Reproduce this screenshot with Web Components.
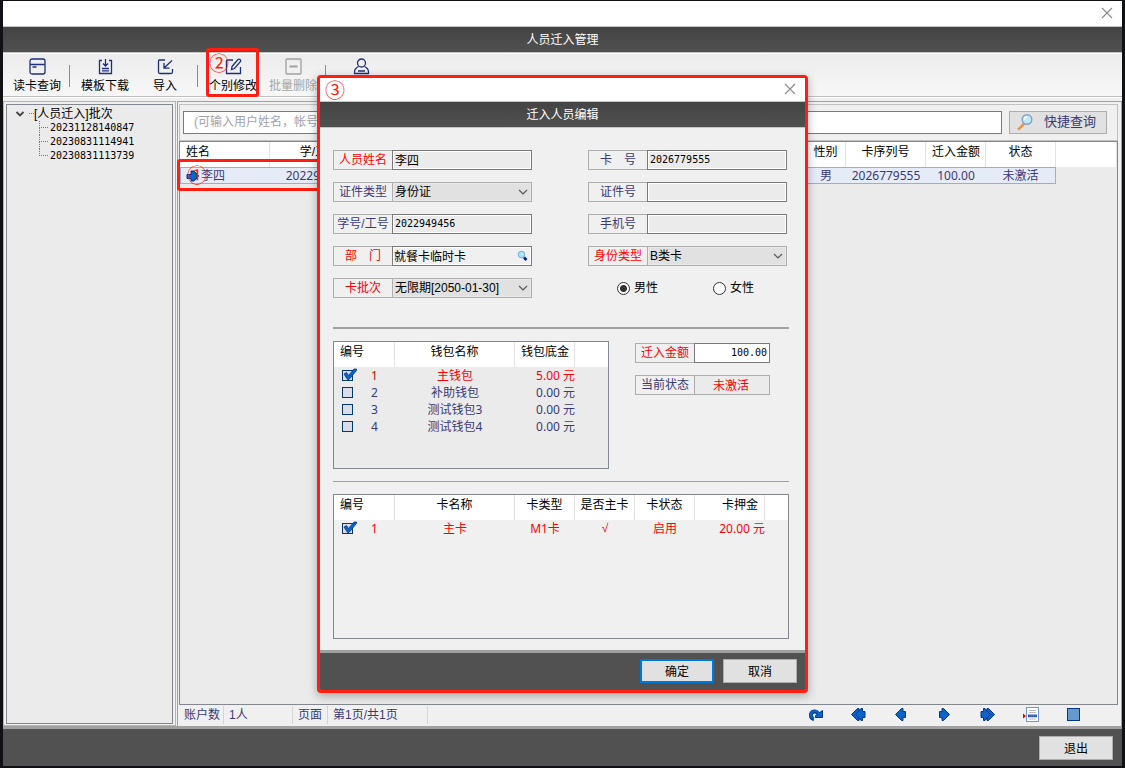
<!DOCTYPE html>
<html lang="zh-CN">
<head>
<meta charset="utf-8">
<title>人员迁入管理</title>
<style>
  html, body { margin: 0; height: 100%; }
  body {
    background: #101114;
    font: 12px/16px "Liberation Sans", "Noto Sans CJK SC", sans-serif;
    color: #000;
    --ink: #3a3a78;
    --accent: #ff1e10;
    --line: #a0a0a0;
    --mono: "DejaVu Sans Mono", "Noto Sans CJK SC", monospace;
    --data: "Noto Sans", "Noto Sans CJK SC", sans-serif;
  }
</style>
</head>
<body>
<app-window heading="人员迁入管理">
  <app-toolbar slot="toolbar">
    <tool-button icon="card">读卡查询</tool-button>
    <tool-separator></tool-separator>
    <tool-button icon="download">模板下载</tool-button>
    <tool-button icon="import">导入</tool-button>
    <tool-separator></tool-separator>
    <tool-button icon="edit" step="②">个别修改</tool-button>
    <tool-button icon="minus" disabled>批量删除</tool-button>
    <tool-separator></tool-separator>
    <tool-button icon="user" label="人员"></tool-button>
  </app-toolbar>
  <batch-tree slot="side"></batch-tree>
  <person-panel></person-panel>
  <push-button slot="footer">退出</push-button>
</app-window>

<edit-dialog heading="迁入人员编辑" step="③">
  <form-grid>
    <form-field label="人员姓名" required value="李四"></form-field>
    <form-field label="卡　号" value="2026779555" mono></form-field>
    <select-field label="证件类型" value="身份证"></select-field>
    <form-field label="证件号"></form-field>
    <form-field label="学号/工号" value="2022949456" mono></form-field>
    <form-field label="手机号"></form-field>
    <form-field label="部　门" required value="就餐卡临时卡" lookup></form-field>
    <select-field label="身份类型" required value="B类卡"></select-field>
    <select-field label="卡批次" required value="无限期[2050-01-30]"></select-field>
    <gender-field></gender-field>
  </form-grid>
  <wallet-section></wallet-section>
  <card-grid></card-grid>
  <push-button slot="footer" primary>确定</push-button>
  <push-button slot="footer">取消</push-button>
</edit-dialog>

<script>
const BASE = `:host,*{box-sizing:border-box} button,input,select{font:inherit;color:inherit;margin:0} svg{display:block}`;

function define(name, render) {
  customElements.define(name, class extends HTMLElement {
    constructor() { super(); this.attachShadow({ mode: 'open' }); }
    connectedCallback() {
      const { css, html } = render(this);
      const t = document.createElement('template');
      t.innerHTML = `<style>${BASE}${css}</style>${html}`;
      this.shadowRoot.replaceChildren(t.content.cloneNode(true));
    }
  });
}
const attr = (el, n) => el.getAttribute(n) || '';

const CLOSE = `<button class="close" aria-label="关闭"><svg width="12" height="12" viewBox="0 0 12 12"><path d="M1 1l10 10M11 1L1 11" stroke="#8a8a8a" stroke-width="1.1" fill="none"/></svg></button>`;
const HEAD_CSS = `
  .caption{display:flex;justify-content:space-between;align-items:center;background:#fff;border-bottom:1px solid #c4c4c4}
  .close{border:0;background:none;padding:0;width:12px;height:12px}
  h1,h2{margin:0;height:26px;font-size:12px;font-weight:400;line-height:27px;text-align:center;color:#fff;
    background:linear-gradient(#444,#505050);border-bottom:1px solid #c4c4c4}`;

define('app-window', el => ({
  css: `${HEAD_CSS}
    :host{display:flex;flex-direction:column;min-height:100vh;padding:1px 3px 2px 3px;}
    .caption{height:26px;padding:0 9px 2px}
    .main{flex:1;display:flex;background:#f0f0f0;border-top:1px solid #fff;min-height:0}
    aside{flex:0 0 173px;display:flex;padding:2px 2px 1px;border:1px solid #b4b4b4;margin-top:3px}
    section{flex:1;min-width:0;display:flex;margin:3px 0 0 1px;border:1px solid #a0a0a0;border-bottom:0;padding:2px 3px 0 1px}
    ::slotted(*){flex:1;min-width:0}
    footer{height:40px;border-top:3px solid var(--line);background:#515151;display:flex;justify-content:flex-end;padding:7px 9px}
    footer ::slotted(*){flex:none}`,
  html: `<div class="caption"><span></span>${CLOSE}</div>
    <h1>${attr(el, 'heading')}</h1>
    <slot name="toolbar"></slot>
    <div class="main"><aside><slot name="side"></slot></aside><section><slot></slot></section></div>
    <footer><slot name="footer"></slot></footer>`
}));

define('app-toolbar', () => ({
  css: `:host{display:flex !important;flex:none !important;height:44px;padding:4px 4px 0;background:linear-gradient(#ececec,#f7f7f7);
    border-top:1px solid #fff;border-bottom:1px solid #c0c0c0}`,
  html: `<slot></slot>`
}));

define('tool-separator', () => ({
  css: `:host{display:block;flex:none;width:1px;height:22px;background:#8c8c8c;margin:7px 5px 0 2px}`, html: ``
}));

const TOOL_ICONS = {
  card: `<rect x="1" y="1" width="15" height="15" rx="2"/><path d="M1 6.500h15M3.500 9h4"/>`,
  download: `<path d="M5 2.500H2.500v13h12v-13H12M8.500 1v6.500M6 5.500l2.500 2.500L11 5.500M5 10.500h7M5 12.800h7"/>`,
  import: `<path d="M8 2H2.500Q1.500 2 1.500 3v11Q1.500 15.500 3 15.500h11Q15.500 15.500 15.500 14v-3M15 2.500L7 10M7 5v5.200h5.500"/>`,
  edit: `<path d="M8 2H2.500Q1.500 2 1.500 3v12.500h14V9"/><path d="M7 8.500l6-7q1-.8 2 0t.5 2l-6 7-3 1z"/>`,
  minus: `<rect x="1" y="1" width="15" height="15" rx="1"/><path d="M4.500 8.500h8" stroke-width="2"/>`,
  user: `<circle cx="8.500" cy="5" r="4"/><path d="M5.500 8.500Q1.500 10.500 1.500 14v1.500h14V14q0-3.500-4-5.500M5 13h7"/>`
};
define('tool-button', el => ({
  css: `:host{display:block;flex:none;width:60px;position:relative}
    button{border:0;background:none;padding:0;width:100%;display:flex;flex-direction:column;align-items:center;gap:3px;
      line-height:16px;white-space:nowrap;--ic:#1e2f7c}
    button:disabled{color:#a5a5a5;--ic:#a0a0a0}
    svg{fill:none;stroke:var(--ic);stroke-width:1.3}
    .mark{position:absolute;left:3px;top:-10px;width:53px;height:49px;border:3px solid var(--accent);border-radius:3px;
      color:var(--accent);font:20px/20px "Noto Sans CJK SC",sans-serif;pointer-events:none;padding-top:2px}`,
  html: `<button ${el.hasAttribute('disabled') ? 'disabled' : ''} ${el.hasAttribute('label') ? `aria-label="${attr(el, 'label')}"` : ''}>
    <svg width="17" height="17" viewBox="0 0 17 17">${TOOL_ICONS[attr(el, 'icon')]}</svg><span><slot></slot></span></button>
    ${el.hasAttribute('step') ? `<div class="mark">${attr(el, 'step')}</div>` : ''}`
}));

define('push-button', el => ({
  css: `:host{display:block;width:74px}
    button{width:100%;height:24px;padding:1px 0 0;background:#e1e1e1;border:1px solid #adadad;line-height:20px}
    .primary{border:2px solid #0078d7;line-height:18px}`,
  html: `<button class="${el.hasAttribute('primary') ? 'primary' : ''}"><slot></slot></button>`
}));

define('batch-tree', () => ({
  css: `:host{display:block;background:#ebebeb;border:1px solid #828790;padding:1px 8px}
    .root{display:flex;align-items:center;height:15px;white-space:nowrap}
    .root i{width:5px;border-top:1px dotted #777;margin-left:4px}
    ul{list-style:none;margin:0 0 0 24px;padding:0}
    li{height:14px;display:flex;font:10px/14px var(--mono)}
    li i{width:9px;height:7px;border-left:1px dotted #777;border-bottom:1px dotted #777;margin-right:2px;flex:none;position:relative}
    li:not(:last-child) i::after{content:"";position:absolute;left:-1px;top:7px;height:7px;border-left:1px dotted #777}`,
  html: `<div class="root"><svg width="10" height="8" viewBox="0 0 10 8"><path d="M1.500 2l3.500 3.500L8.500 2" fill="none" stroke="#444" stroke-width="1.800"/></svg><i></i>[人员迁入]批次</div>
    <ul><li><i></i>20231128140847</li><li><i></i>20230831114941</li><li><i></i>20230831113739</li></ul>`
}));

const LENS = `<svg width="18" height="18" viewBox="0 0 18 18"><path d="M2 16.500l6-6" stroke="#e8913a" stroke-width="2.600"/><path d="M1.500 15.500l5-5" stroke="#ffd08a" stroke-width="1"/><circle cx="11" cy="6.500" r="4.800" fill="#bfe9f5" stroke="#7fa0cf" stroke-width="1.400"/><path d="M8.500 6.500q0-2.500 2.500-2.500" stroke="#fff" stroke-width="1.400" fill="none"/></svg>`;
const B = 'fill="#0a64c8" stroke="#03358c" stroke-width="1"';
const PAGER = [
  ['刷新', `<path d="M7 13A3.800 3.800 0 1 1 11 7.500" fill="none" stroke="#03358c" stroke-width="4"/><path d="M8.500 9.500L15.500 4.500v7H8.500z" ${B}/><path d="M7 12.500A3.800 3.800 0 1 1 11.500 8.500" fill="none" stroke="#0a64c8" stroke-width="2"/>`],
  ['首页', `<path d="M1.500 8.500L7.500 2.500H9V4.500L11 2.500h1.500v3H15v6h-2.500v3H11L9 12.500v2H7.500z" ${B}/><path d="M10.500 3.500L5.500 8.500l5 5" stroke="#03358c" fill="none"/>`],
  ['上一页', `<path d="M2.500 8.500L8.500 2.500H10v3h2.500v6H10v3H8.500z" ${B}/>`],
  ['下一页', `<path d="M13.500 8.500L7.500 2.500H6v3H3.500v6H6v3h1.500z" ${B}/>`],
  ['末页', `<path d="M15.500 8.500L9.500 2.500H8V4.500L6 2.500H4.500v3H2v6h2.500v3H6L8 12.500v2h1.500z" ${B}/><path d="M6.500 3.500l5 5-5 5" stroke="#03358c" fill="none"/>`],
  ['跳转', `<rect x="4.500" y="1.500" width="12" height="14" fill="#fff" stroke="#6a9bd2"/><path d="M7 4.500h7M7 6.500h7M7 13h7" stroke="#bbb"/><rect x="6.500" y="9" width="8" height="1.800" fill="#6a9bd2" stroke="#03358c" stroke-width=".8"/><path d="M1 7.500v5l3-2.500z" fill="#d00"/>`],
  ['停止', `<rect x="2.500" y="2.500" width="12" height="12" fill="#6699cc" stroke="#03358c"/>`]
];
define('person-panel', () => ({
  css: `:host{display:flex !important;flex-direction:column}
    form{flex:none;display:flex;align-items:center;gap:7px;height:37px;padding:0 10px 1px 3px;border:1px solid #c0c0c0}
    form input{flex:1;min-width:0;height:23px;border:1px solid #7a7a7a;background:#fff;padding:0 10px;font-size:12px}
    form input::placeholder{color:#a2a2ac;opacity:1}
    form button{flex:none;width:98px;height:23px;border:1px solid #adadad;background:#e1e1e1;color:var(--ink);padding:0 10px 0 6px;
      display:flex;justify-content:space-between;align-items:center;font-size:13px}
    .grid{flex:1;position:relative;border:1px solid #828790;background:#ebebeb}
    table{border-collapse:separate;border-spacing:0;table-layout:fixed;width:100%;white-space:nowrap}
    th{height:25px;padding:1px 6px 7px;font-weight:400;line-height:16px;background:#fff;border-right:1px solid #e2e2e2;overflow:hidden}
    th:first-child{text-align:left}
    td{height:17px;padding:0;font:12px/15px var(--data);color:var(--ink);text-align:center;background:#e5ebf7;
      border:solid #93afe2;border-width:1px 0}
    td:first-child{border-left-width:1px}
    td:nth-last-child(2){border-right-width:1px}
    td:last-child{background:none;border:0}
    .name{display:flex;gap:1px;align-items:center;padding-left:5px}
    .mark{position:absolute;left:-3px;top:17px;width:144px;height:32px;border:3px solid var(--accent);border-radius:3px;pointer-events:none;
      color:var(--accent);font:20px/26px "Noto Sans CJK SC",sans-serif;padding-left:7px}
    .status{flex:none;display:flex;height:21px;color:var(--ink);background:#f0f0f0;line-height:18px;white-space:nowrap}
    .status span{border-right:1px solid #d4d4d4;padding:0 5px;height:18px;margin-top:1px;flex:none}
    nav{margin-left:auto;display:flex;padding-right:23px}
    nav button{width:43px;border:0;background:none;padding:1px 13px 3px}`,
  html: `<form onsubmit="return false"><input aria-label="查询条件" placeholder="(可输入用户姓名，帐号">
      <button>${LENS}<span>快捷查询</span></button></form>
    <div class="grid"><table>
      <colgroup><col style="width:90px"><col style="width:100px"><col style="width:436px"><col style="width:40px"><col style="width:80px"><col style="width:60px"><col style="width:70px"><col></colgroup>
      <thead><tr><th>姓名</th><th>学/工号</th><th></th><th>性别</th><th>卡序列号</th><th>迁入金额</th><th>状态</th><th></th></tr></thead>
      <tbody><tr><td><span class="name"><svg width="14" height="12" viewBox="0 0 14 12"><path d="M1 4.500h4V1h3l5 5-5 5H5V8.500H1z" ${B}/></svg>李四</span></td><td>2022949456</td><td></td><td>男</td><td>2026779555</td><td>100.00</td><td>未激活</td><td></td></tr></tbody>
    </table><div class="mark">①</div></div>
    <div class="status"><span style="width:45px">账户数</span><span style="width:69px">1人</span><span style="width:35px">页面</span><span style="width:100px">第1页/共1页</span>
      <nav>${PAGER.map(([n, s]) => `<button aria-label="${n}"><svg width="17" height="17" viewBox="0 0 17 17">${s}</svg></button>`).join('')}</nav></div>`
}));

define('edit-dialog', el => ({
  css: `${HEAD_CSS}
    :host{position:absolute;inset:0;display:grid;place-items:center}
    .box{width:491px;border:3px solid var(--accent);border-radius:4px;background:#f0f0f0;box-shadow:0 3px 10px rgba(0,0,0,.3);overflow:hidden}
    .caption{height:24px;padding:0 9px 0 5px}
    .caption b{font:20px/20px "Noto Sans CJK SC",sans-serif;color:var(--accent);height:20px}
    .close{margin-bottom:2px}
    .body{padding:22px 16px 11px 13px}
    footer{height:40px;border-top:3px solid var(--line);background:#515151;display:flex;justify-content:flex-end;gap:9px;padding:6px 8px}`,
  html: `<div class="box" role="dialog" aria-label="${attr(el, 'heading')}">
    <div class="caption"><b>${attr(el, 'step')}</b>${CLOSE}</div><h2>${attr(el, 'heading')}</h2>
    <div class="body"><slot></slot></div><footer><slot name="footer"></slot></footer></div>`
}));

define('form-grid', () => ({
  css: `:host{display:grid;grid-template-columns:199px 199px;column-gap:56px;row-gap:12px;padding-bottom:29px;border-bottom:2px solid var(--line);margin-bottom:12px}`,
  html: `<slot></slot>`
}));

const FIELD_CSS = `
  :host{display:flex;height:20px;position:relative}
  label{flex:0 0 59px;border:1px solid #adadad;border-right:0;line-height:18px;text-align:center;color:var(--ink);white-space:nowrap}
  :host([required]) label{color:#f00}
  input,select{flex:1;min-width:0;width:0;height:20px;border-radius:0;font-size:12px;line-height:16px}
  input{border:1px solid #7a7a7a;background:#ebebeb;padding:0 2px 1px;box-shadow:inset 0 0 0 1px #fff}
  :host([mono]) input{font:10px/14px var(--mono);padding-bottom:2px}`;
define('form-field', el => ({
  css: `${FIELD_CSS}
    .lookup{position:absolute;right:4px;top:4px;border:0;padding:0;background:none}
    :host([lookup]) input{background:#f0f0f0;padding-left:1px}
    :host([plain]) input{background:#fff;text-align:right;box-shadow:none}
    :host([status]) input{border-color:#adadad;text-align:center;color:#f00;box-shadow:none;padding-right:4px}`,
  html: `<label for="f">${attr(el, 'label')}</label><input id="f" value="${attr(el, 'value')}">
    ${el.hasAttribute('lookup') ? `<button class="lookup" aria-label="选择"><svg width="11" height="12" viewBox="0 0 11 12"><circle cx="4.500" cy="4.500" r="3.300" fill="#a9e4f7" stroke="#7aa7d8"/><path d="M7 7.500l2.500 2.500" stroke="#00249c" stroke-width="2.800"/></svg></button>` : ''}`
}));
define('select-field', el => ({
  css: `${FIELD_CSS}
    select{appearance:none;border:1px solid #adadad;background:#e1e1e1;padding:0 2px;color:#000;
      box-shadow:inset 0 0 0 1px #e9e9e9}
    svg{position:absolute;right:4px;top:7px;pointer-events:none}`,
  html: `<label for="s">${attr(el, 'label')}</label><select id="s"><option>${attr(el, 'value')}</option></select>
    <svg width="10" height="7" viewBox="0 0 10 7"><path d="M1 1l4 4 4-4" fill="none" stroke="#555" stroke-width="1.200"/></svg>`
}));
define('gender-field', () => ({
  css: `:host{display:flex;height:20px;padding-left:29px;align-items:center;gap:55px}
    label{flex:none;display:flex;align-items:center;gap:4px;height:18px;line-height:18px}
    input{appearance:none;width:13px;height:13px;border:1px solid #333;border-radius:50%;background:#fff}
    input:checked{background:radial-gradient(circle,#333 0 3px,#fff 4px)}`,
  html: `<label><input type="radio" name="g" checked>男性</label><label><input type="radio" name="g">女性</label>`
}));

const GRID_CSS = `
  .grid{border:1px solid #828790;overflow:hidden}
  table{border-collapse:separate;border-spacing:0;table-layout:fixed;width:100%;white-space:nowrap}
  th{height:25px;padding:1px 6px 7px;font-weight:400;line-height:16px;background:#fff;border-right:1px solid #e2e2e2}
  th:last-child{border:0;padding:0}
  th:first-child{text-align:left}
  .r{text-align:right}
  td{padding:0;height:17px;text-align:center;font:12px/17px var(--data);color:var(--ink)}
  td.r{text-align:right}
  td.tick{font-family:"Liberation Sans",sans-serif}
  .on td{color:#f00}
  label{display:flex;align-items:center;padding-left:8px;gap:18px;height:17px;position:relative}
  input{appearance:none;width:11px;height:11px;border:1px solid #003a70;background:#dcdce6}
  label svg{position:absolute;left:8px;top:1px;display:none}
  input:checked + svg{display:block}`;
const pick = (n, on) => `<label><input type="checkbox" ${on ? 'checked' : ''}><svg width="16" height="14" viewBox="0 0 16 14"><path d="M2 6l2.500-1.500L6.500 7.500 12 1h2.500v1.500L7 11.500H5.500z" fill="#0a64c8" stroke="#03358c" stroke-width=".8"/></svg>${n}</label>`;

define('wallet-section', () => ({
  css: `${GRID_CSS}
    :host{display:flex;gap:26px;padding-bottom:12px;border-bottom:1px solid var(--line);margin-bottom:12px}
    .grid{width:276px;height:128px;background:#ebebeb}
    .side{width:135px;display:flex;flex-direction:column;gap:12px;padding-top:2px}`,
  html: `<div class="grid"><table><colgroup><col style="width:61px"><col style="width:120px"><col style="width:60px"><col></colgroup>
    <thead><tr><th>编号</th><th>钱包名称</th><th class="r">钱包底金</th><th></th></tr></thead><tbody>
    ${[['主钱包', '5.00'], ['补助钱包', '0.00'], ['测试钱包3', '0.00'], ['测试钱包4', '0.00']].map(([n, v], i) =>
      `<tr class="${i ? '' : 'on'}"><td>${pick(i + 1, !i)}</td><td>${n}</td><td class="r">${v} 元</td><td></td></tr>`).join('')}
    </tbody></table></div>
    <div class="side"><form-field label="迁入金额" required plain mono value="100.00"></form-field>
    <form-field label="当前状态" status value="未激活"></form-field></div>`
}));
define('card-grid', () => ({
  css: `${GRID_CSS} :host{display:block} .grid{height:145px}`,
  html: `<div class="grid"><table><colgroup><col style="width:61px"><col style="width:120px"><col style="width:60px"><col style="width:60px"><col style="width:60px"><col style="width:70px"><col></colgroup>
    <thead><tr><th>编号</th><th>卡名称</th><th>卡类型</th><th style="padding-left:5px;padding-right:5px">是否主卡</th><th>卡状态</th><th class="r">卡押金</th><th></th></tr></thead>
    <tbody><tr class="on"><td>${pick(1, true)}</td><td>主卡</td><td>M1卡</td><td class="tick">√</td><td>启用</td><td class="r">20.00 元</td><td></td></tr></tbody></table></div>`
}));
</script>
</body>
</html>
